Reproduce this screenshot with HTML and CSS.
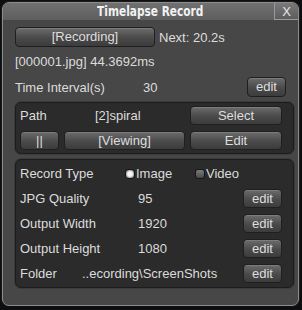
FILE: index.html
```html
<!DOCTYPE html>
<html lang="en">
<head>
    <meta charset="UTF-8">
    <title>Timelapse Record</title>
    <link rel="stylesheet" href="styles.css">
</head>
<body>

    <div class="window">
        <!-- title bar -->
        <div class="titlebar">
            <span></span>
            <span class="title"><span class="title-text">Timelapse Record</span></span>
            <button class="close">X</button>
        </div>

        <div class="content">
            <div class="row rec-row">
                <button class="btn rec-btn">[Recording]</button>
                <span class="next">Next: 20.2s</span>
            </div>
            <div class="row info-row">[000001.jpg] 44.3692ms</div>
            <div class="row interval-row">
                <span class="label interval-label">Time Interval(s)</span>
                <span class="value">30</span>
                <button class="btn edit-btn">edit</button>
            </div>

            <!-- path box -->
            <div class="box path-box">
                <div class="path-row">
                    <span class="label path-label">Path</span>
                    <span class="path-name">[2]spiral</span>
                    <button class="btn wide-btn">Select</button>
                </div>
                <div class="path-row">
                    <button class="btn pause-btn">||</button>
                    <button class="btn view-btn">[Viewing]</button>
                    <button class="btn wide-btn">Edit</button>
                </div>
            </div>

            <!-- record settings -->
            <div class="box rec-box">
                <div class="opt-row">
                    <span class="label opt-label">Record Type</span>
                    <span class="radio-group">
                        <span class="radio on"><i></i>Image</span>
                        <span class="radio"><i></i>Video</span>
                    </span>
                </div>
                <div class="opt-row">
                    <span class="label opt-label">JPG Quality</span>
                    <span class="opt-value">95</span>
                    <button class="btn small-btn">edit</button>
                </div>
                <div class="opt-row">
                    <span class="label opt-label">Output Width</span>
                    <span class="opt-value">1920</span>
                    <button class="btn small-btn">edit</button>
                </div>
                <div class="opt-row">
                    <span class="label opt-label">Output Height</span>
                    <span class="opt-value">1080</span>
                    <button class="btn small-btn">edit</button>
                </div>
                <div class="opt-row">
                    <span class="label folder-label">Folder</span>
                    <span class="folder-value">..ecording\ScreenShots</span>
                    <button class="btn small-btn">edit</button>
                </div>
            </div>
        </div>
    </div>

</body>
</html>
```

FILE: styles.css
```css
body { margin: 0; background: #0d0e10; font-family: "Liberation Sans", Arial, sans-serif; font-size: 13px; color: #dcdcdc; }
.window { margin: 2px 0 0 2px; width: 295px; height: 302px; border: 1px solid #8c8c8c; border-radius: 7px; background: #474747; box-shadow: 0 0 0 1px #1a1a1a; overflow: hidden; }
.titlebar { display: grid; grid-template-columns: 24px 1fr 24px; height: 17px; background: linear-gradient(#707070, #5e5e5e); }
.title { text-align: center; font-family: "DejaVu Sans Condensed", sans-serif; font-weight: bold; font-size: 14px; line-height: 17px; color: #f2f2f2; }
.title-text { display: inline-block; transform: scaleX(0.84); }
.close { margin: 0; padding: 0; height: 17px; border: 1px solid #9a9a9a; border-right: none; border-top: none; border-top-right-radius: 6px; background: linear-gradient(#7a7a7a, #5c5c5c); color: #e8e8e8; font-family: "Liberation Sans", sans-serif; font-size: 13px; line-height: 15px; }
.content { padding: 7px 0 0 12px; }
.row { display: flex; align-items: center; height: 20px; }
.btn { margin: 0; padding: 0; height: 20px; border: 1px solid #1f1f1f; border-radius: 4px; background: linear-gradient(#6c6c6c, #4a4a4a 55%, #3c3c3c); color: #dedede; font-family: "Liberation Sans", Arial, sans-serif; font-size: 13px; line-height: 18px; box-shadow: inset 0 1px 0 rgba(255, 255, 255, 0.12); }
.rec-btn { width: 140px; }
.next { margin-left: 4px; }
.info-row { margin-top: 4px; }
.interval-row { margin-top: 6px; }
.interval-label { width: 128px; }
.value { width: 104px; }
.edit-btn { width: 39px; }
.box { background: #2b2b2b; border: 1px solid #1c1c1c; border-radius: 6px; width: 269px; box-shadow: 0 0 0 1px #3c3c3c; }
.path-box { margin-top: 5px; padding: 3px 4px; display: flex; flex-direction: column; gap: 6px; }
.path-row { display: flex; align-items: center; height: 19px; }
.path-row .btn { height: 19px; line-height: 17px; }
.path-label { width: 75px; }
.path-name { width: 95px; }
.wide-btn { width: 92px; }
.pause-btn { width: 39px; margin-right: 5px; }
.view-btn { width: 121px; margin-right: 5px; }
.rec-box { margin-top: 5px; padding: 1px 4px; }
.opt-row { display: flex; align-items: center; height: 25px; }
.opt-label { width: 118px; }
.opt-value { width: 105px; }
.small-btn { width: 39px; height: 19px; line-height: 17px; }
.radio-group { display: flex; }
.radio { display: flex; align-items: center; width: 83px; margin-left: -13px; }
.radio i { display: inline-block; width: 8px; height: 8px; margin-right: 1px; border: 1px solid #151515; border-radius: 3px; background: linear-gradient(#7c7c7c, #4a4a4a); }
.radio.on i { background: radial-gradient(circle, #f6f6f6 40%, #a8a8a8 65%, #555555 90%); }
.folder-label { width: 62px; }
.folder-value { width: 161px; }
```
